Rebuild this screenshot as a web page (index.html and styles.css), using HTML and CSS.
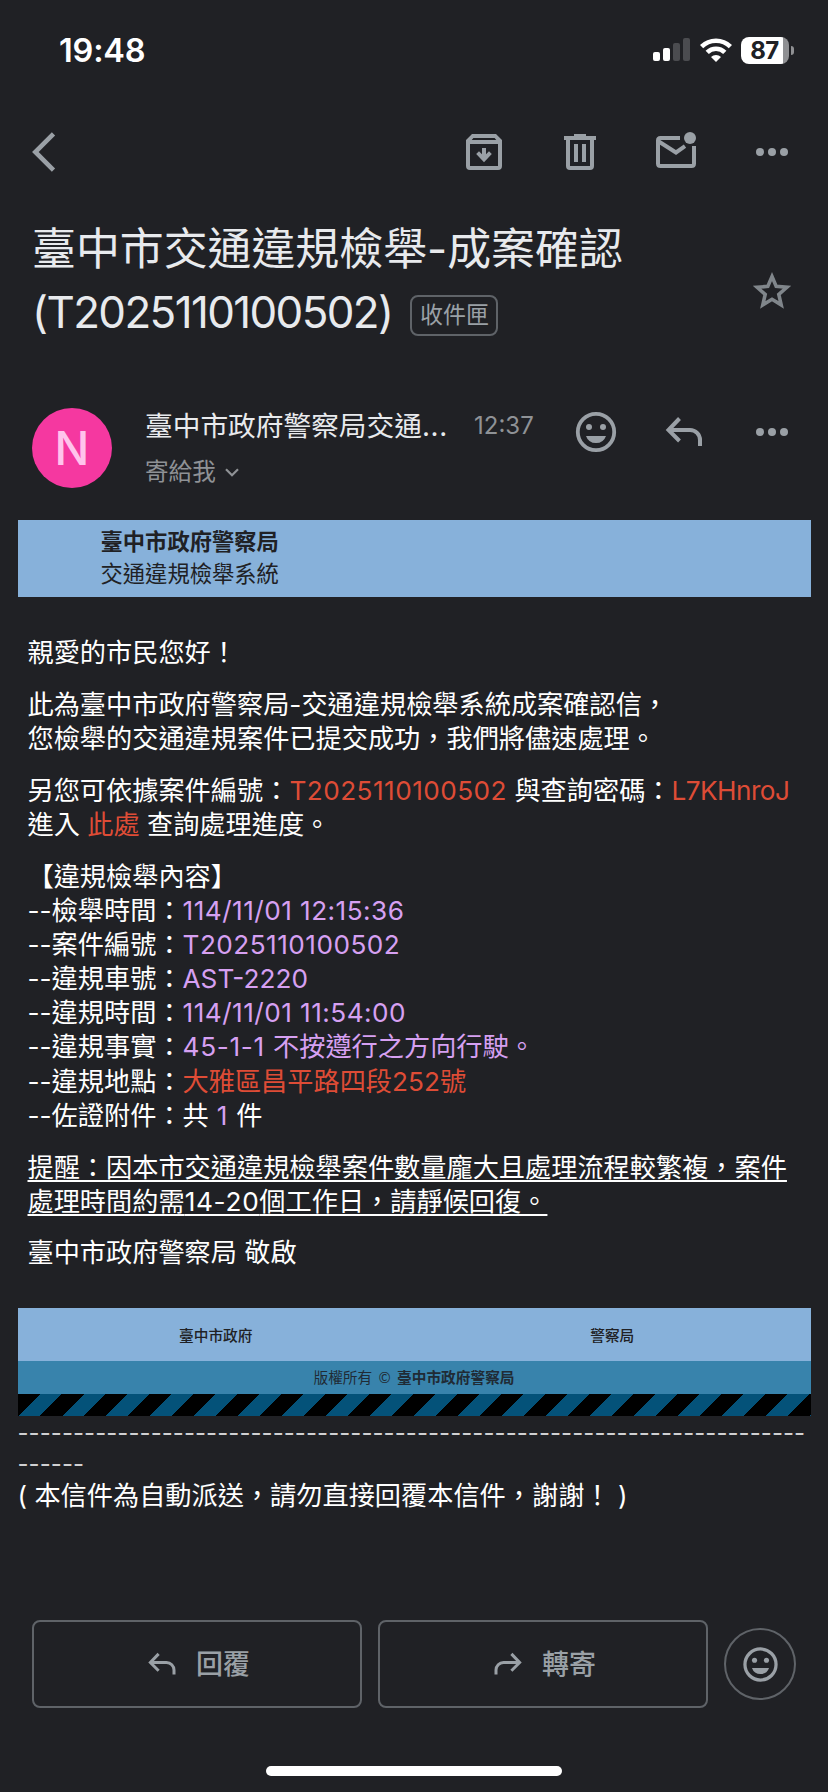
FILE: index.html
```html
<!DOCTYPE html>
<html lang="zh-Hant">
<head>
<meta charset="utf-8">
<title>臺中市交通違規檢舉-成案確認</title>
<link rel="stylesheet" href="styles.css">
</head>
<body>
<svg width="0" height="0" class="defs">
  <symbol id="more" viewBox="0 0 48 48"><circle cx="12" cy="24" r="4"/><circle cx="24" cy="24" r="4"/><circle cx="36" cy="24" r="4"/></symbol>
  <symbol id="smile" viewBox="0 0 48 48"><circle cx="24" cy="24" r="18.2" fill="none" stroke="currentColor" stroke-width="3.8"/><circle cx="17" cy="19" r="3"/><circle cx="31" cy="19" r="3"/><path d="M14 28h20a10.6 10.6 0 0 1-20 0z"/></symbol>
  <symbol id="reply" viewBox="0 0 48 48"><path d="M19.5 10.5L8.500 22l11 11M9 22h21a10 10 0 0 1 10 10v6" fill="none" stroke="currentColor" stroke-width="4"/></symbol>
</svg>
<div class="screen">
  <header class="status">
    <div class="clock">19:48</div>
    <div class="indicators">
      <svg class="signal" viewBox="0 0 38 24" width="38" height="24"><rect x="0" y="14" width="7" height="9" rx="2"/><rect x="10" y="10" width="7" height="13" rx="2"/><g fill="#4b4c50"><rect x="20" y="5" width="7" height="18" rx="2"/><rect x="30" y="0" width="7" height="23" rx="2"/></g></svg>
      <svg class="wifi" viewBox="0 0 32 24" width="32" height="24"><g fill="none" stroke="#fff" stroke-width="4.6"><path d="M1.6 8.6a20.5 20.5 0 0 1 28.8 0"/><path d="M7.2 14.3a12.5 12.5 0 0 1 17.6 0"/></g><path d="M16 24l-5-5a7.1 7.1 0 0 1 10 0z" fill="#fff"/></svg>
      <div class="battery">87</div>
      <div class="battery-cap"></div>
    </div>
  </header>

  <nav class="toolbar">
    <svg class="back" viewBox="0 0 24 40" width="24" height="40"><path d="M21.500 1.800L3.300 20l18.200 18.200" fill="none" stroke="currentColor" stroke-width="4.600"/></svg>
    <div class="actions">
      <svg class="icon" viewBox="0 0 48 48"><path fill-rule="evenodd" d="M12 6h24l6 6v26a4 4 0 0 1-4 4H10a4 4 0 0 1-4-4V12zM13.400 10L11.700 12h24.600L34.600 10zM10 16v22h28V16z"/><path d="M22 20h4v6.300l3-3 2.800 2.800L24 34.300l-7.800-8.200 2.800-2.800 3 3z"/></svg>
      <svg class="icon" viewBox="0 0 48 48"><path fill-rule="evenodd" d="M18 6h12v2h10v4h-2v26a4 4 0 0 1-4 4H14a4 4 0 0 1-4-4V12H8V8h10zM14 12v26h20V12z"/><path d="M18 16h4v18h-4zM26 16h4v18h-4z"/></svg>
      <svg class="icon" viewBox="0 0 48 48"><g fill="none" stroke="currentColor" stroke-width="4"><path d="M28 10H8.500Q6 10 6 12.500v23Q6 38 8.500 38h31q2.500 0 2.500-2.500V18"/><path d="M6 13l18 11.500 9-6.300"/></g><circle cx="38" cy="10" r="6"/></svg>
      <svg class="icon"><use href="#more"/></svg>
    </div>
  </nav>

  <section class="subject">
    <h1 class="title">臺中市交通違規檢舉-成案確認<br><span class="title-num">(T2025110100502)</span><span class="chip">收件匣</span></h1>
    <svg class="icon star" viewBox="0 0 48 48"><path fill="none" stroke="currentColor" stroke-width="3.600" d="M24 8.500l4.200 9.900 10.700.9-8.100 7.100 2.400 10.500-9.200-5.600-9.200 5.600 2.400-10.500-8.100-7.100 10.700-.9z"/></svg>
  </section>

  <section class="sender">
    <div class="avatar">N</div>
    <div class="who">
      <div class="who-line"><span class="name">臺中市政府警察局交通<span class="dots">...</span></span><span class="time">12:37</span></div>
      <div class="to">寄給我<svg viewBox="0 0 14 9" width="14" height="9"><path d="M1 1.200l6 6 6-6" fill="none" stroke="currentColor" stroke-width="2.200"/></svg></div>
    </div>
    <div class="sender-actions">
      <svg class="icon"><use href="#smile"/></svg>
      <svg class="icon"><use href="#reply"/></svg>
      <svg class="icon"><use href="#more"/></svg>
    </div>
  </section>

  <main class="mail">
    <div class="banner"><strong>臺中市政府警察局</strong><span>交通違規檢舉系統</span></div>
    <div class="letter">
      <p>親愛的市民您好！</p>
      <p>此為臺中市政府警察局-交通違規檢舉系統成案確認信，<br>您檢舉的交通違規案件已提交成功，我們將儘速處理。</p>
      <p>另您可依據案件編號：<span class="red num">T2025110100502</span> 與查詢密碼：<span class="red code">L7KHnroJ</span><br>進入 <span class="red">此處</span> 查詢處理進度。</p>
      <p>【違規檢舉內容】<br>
      --檢舉時間：<span class="violet num">114/11/01 12:15:36</span><br>
      --案件編號：<span class="violet num">T2025110100502</span><br>
      --違規車號：<span class="violet">AST-2220</span><br>
      --違規時間：<span class="violet num">114/11/01 11:54:00</span><br>
      --違規事實：<span class="violet"><span class="wide">45-1-1 </span>不按遵行之方向行駛。</span><br>
      --違規地點：<span class="red">大雅區昌平路四段252號</span><br>
      --佐證附件：共<span class="wide"> <span class="violet">1</span> </span>件</p>
      <p class="notice">提醒：因本市交通違規檢舉案件數量龐大且處理流程較繁複，案件<br>處理時間約需<span class="wide">14-20</span>個工作日，請靜候回復。</p>
      <p>臺中市政府警察局 敬啟</p>
    </div>
    <div class="orgs"><span>臺中市政府</span><span>警察局</span></div>
    <div class="rights">版權所有 <span class="copy">©</span> <strong>臺中市政府警察局</strong></div>
    <div class="stripes"></div>
    <div class="auto">
      <div class="dashes">-----------------------------------------------------------------------<br>------</div>
      <div class="auto-text">( 本信件為自動派送，請勿直接回覆本信件，謝謝！ )</div>
    </div>
  </main>

  <footer class="reply-bar">
    <div class="button"><svg class="small-icon"><use href="#reply"/></svg><span class="label">回覆</span></div>
    <div class="button"><svg class="small-icon flip"><use href="#reply"/></svg><span class="label">轉寄</span></div>
    <div class="round"><svg class="smile-icon"><use href="#smile"/></svg></div>
  </footer>
  <div class="home"></div>
</div>
</body>
</html>
```
FILE: styles.css
```css
* { box-sizing: border-box; }
body { margin: 0; background: #202125; }
.defs { position: absolute; }
.screen {
  width: 828px; height: 1792px; overflow: hidden;
  display: flex; flex-direction: column;
  background: #202125; color: #fff;
  font-family: Inter, "Noto Sans CJK TC", sans-serif;
}
svg { display: block; flex: none; fill: currentColor; }
.icon { width: 48px; height: 48px; }

.status { height: 104px; padding: 0 34px 4px 59px; display: flex; align-items: center; justify-content: space-between; }
.clock { font-size: 32.500px; font-weight: 600; letter-spacing: -0.2px; line-height: 40px; padding-top: 1px; }
.indicators { display: flex; align-items: center; }
.wifi { margin: 0 9px 0 9px; }
.battery { width: 48px; height: 27px; border-radius: 8px; background: linear-gradient(90deg, #fff 42px, #8f9093 42px); color: #202125; font-size: 24px; font-weight: 700; line-height: 27px; text-align: center; padding-right: 1px; letter-spacing: -0.5px; }
.battery-cap { width: 3px; height: 9px; margin-left: 2px; border-radius: 0 4px 4px 0; background: #8f9093; }

.toolbar { height: 96px; padding: 0 32px; display: flex; align-items: center; justify-content: space-between; color: #9aa0a6; }
.actions { display: flex; gap: 48px; }

.subject { height: 208px; padding: 17.500px 32px 0 32px; display: flex; justify-content: space-between; }
.title { margin: 0; font-size: 43.900px; font-weight: 400; line-height: 63px; color: #e8eaed; white-space: nowrap; }
.title-num { letter-spacing: -1.600px; }
.chip { display: inline-block; margin-left: 18px; width: 88px; height: 41px; border: 2px solid #5f6368; border-radius: 8px; color: #9aa0a6; font-size: 23px; line-height: 37px; text-align: center; vertical-align: 5px; }
.star { margin-top: 50.500px; color: #80868b; }

.sender { height: 112px; padding: 0 32px; display: flex; }
.avatar { width: 80px; height: 80px; border-radius: 50%; background: #f538a0; color: #ffc4ec; font-size: 46px; font-weight: 500; line-height: 80px; text-align: center; }
.who { margin-left: 33px; width: 400px; }
.who-line { display: flex; height: 36px; line-height: 36px; color: #e8eaed; white-space: nowrap; }
.name { width: 329px; font-size: 27.700px; }
.dots { letter-spacing: 0.700px; }
.time { font-size: 24px; color: #8f9296; }
.to { display: flex; align-items: center; height: 36px; margin-top: 10px; font-size: 23.600px; line-height: 36px; color: #8f9296; }
.to svg { margin-left: 9px; }
.sender-actions { display: flex; gap: 40px; margin-left: auto; color: #9aa0a6; }

.mail { margin: 0 17.500px; }
.banner { height: 77px; padding: 6px 0 0 83px; background: #87b1da; color: #202125; display: flex; flex-direction: column; font-size: 22.300px; line-height: 31.700px; }
.letter { height: 711px; padding: 39.100px 0 0 10px; font-size: 26.200px; line-height: 34.100px; white-space: nowrap; }
.letter p { margin: 0 0 17.800px; }
.red { color: #de4c36; }
.violet { color: #d6a0f2; }
.num { letter-spacing: 0.460px; }
.code { letter-spacing: -0.560px; }
.wide { letter-spacing: 0.700px; }
.notice { text-decoration: underline; text-decoration-thickness: 2px; text-underline-offset: 2.500px; text-decoration-skip-ink: none; }
.orgs { height: 53px; display: grid; grid-template-columns: 1fr 1fr; align-items: center; text-align: center; background: #87b1da; color: #202125; font-size: 14.700px; font-weight: 500; }
.orgs span { padding-bottom: 1px; }
.rights { height: 33px; line-height: 32px; text-align: center; background: #3883ac; color: #202b35; font-family: "Noto Sans CJK TC", sans-serif; font-size: 14.700px; }
.copy { margin: 0 3px; }
.stripes { height: 22px; background: repeating-linear-gradient(135deg, #000 0 15.560px, #045279 15.560px 31.110px); }
.auto { padding-top: 2px; }
.dashes { font-size: 24px; letter-spacing: 0.055px; line-height: 30.800px; color: #d0d0d2; white-space: nowrap; }
.auto-text { font-size: 26.200px; line-height: 32px; white-space: nowrap; }

.reply-bar { margin-top: auto; padding: 0 32px; display: flex; align-items: center; gap: 16px; color: #9aa0a6; }
.button { width: 330px; height: 88px; border: 2px solid #5f6368; border-radius: 8px; display: flex; align-items: center; justify-content: center; gap: 16px; font-size: 27px; font-weight: 500; }
.label { padding-bottom: 4px; }
.small-icon { width: 36px; height: 36px; }
.flip { transform: scaleX(-1); }
.round { width: 72px; height: 72px; border: 2px solid #5f6368; border-radius: 50%; display: flex; align-items: center; justify-content: center; }
.smile-icon { width: 41px; height: 41px; }
.home { width: 296px; height: 10px; margin: 58px auto 16px; border-radius: 5px; background: #fff; flex: none; }
```
